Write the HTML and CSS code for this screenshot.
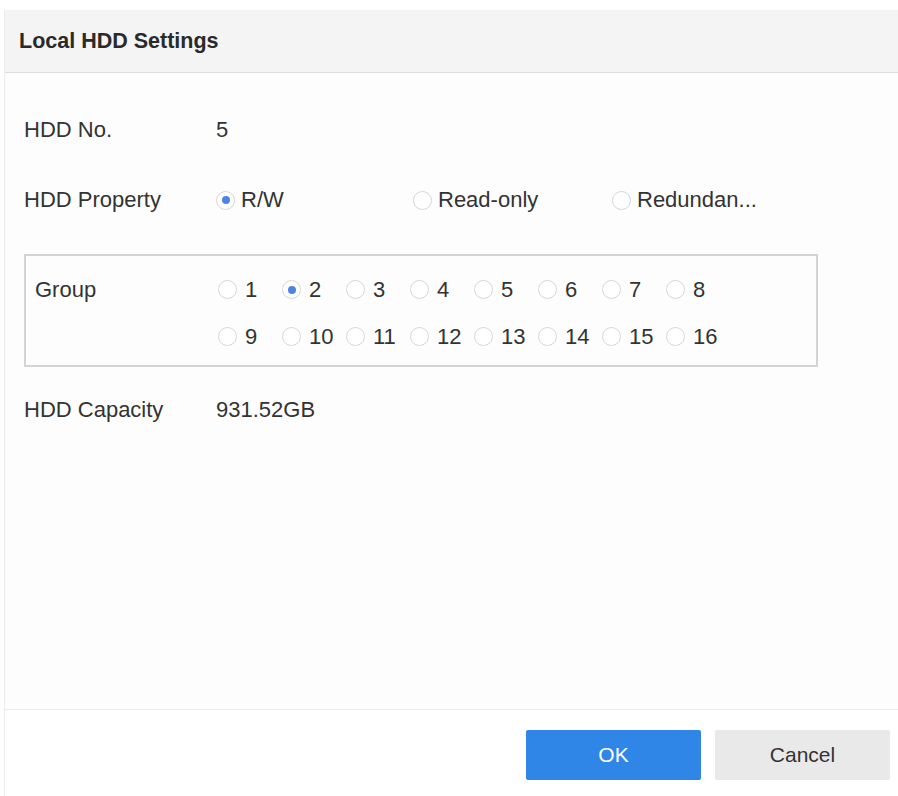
FILE: index.html
```html
<!DOCTYPE html>
<html>
<head>
<meta charset="utf-8">
<link rel="stylesheet" href="styles.css">
</head>
<body>
<div class="dialog">
  <div class="header">Local HDD Settings</div>
  <div class="content">
    <div class="row">
      <div class="label">HDD No.</div>
      <div class="value">5</div>
    </div>
    <div class="row">
      <div class="label">HDD Property</div>
      <div class="prop-options">
        <label class="radio"><span class="dot checked"></span>R/W</label>
        <label class="radio"><span class="dot"></span>Read-only</label>
        <label class="radio"><span class="dot"></span>Redundan...</label>
      </div>
    </div>
    <div class="group-box">
      <div class="group-label">Group</div>
      <div class="group-grid">
        <label class="radio g"><span class="dot"></span>1</label>
        <label class="radio g"><span class="dot checked"></span>2</label>
        <label class="radio g"><span class="dot"></span>3</label>
        <label class="radio g"><span class="dot"></span>4</label>
        <label class="radio g"><span class="dot"></span>5</label>
        <label class="radio g"><span class="dot"></span>6</label>
        <label class="radio g"><span class="dot"></span>7</label>
        <label class="radio g"><span class="dot"></span>8</label>
        <label class="radio g"><span class="dot"></span>9</label>
        <label class="radio g"><span class="dot"></span>10</label>
        <label class="radio g"><span class="dot"></span>11</label>
        <label class="radio g"><span class="dot"></span>12</label>
        <label class="radio g"><span class="dot"></span>13</label>
        <label class="radio g"><span class="dot"></span>14</label>
        <label class="radio g"><span class="dot"></span>15</label>
        <label class="radio g"><span class="dot"></span>16</label>
      </div>
    </div>
    <div class="row">
      <div class="label">HDD Capacity</div>
      <div class="value">931.52GB</div>
    </div>
  </div>
  <div class="footer">
    <button class="btn btn-ok">OK</button>
    <button class="btn btn-cancel">Cancel</button>
  </div>
</div>
</body>
</html>
```

FILE: styles.css
```css
html, body {
  margin: 0;
  padding: 0;
  background: #ffffff;
}
body {
  font-family: "Liberation Sans", Arial, sans-serif;
  color: #333333;
  font-size: 22px;
}
.dialog {
  margin: 10px 0 0 4px;
  height: 786px;
  display: flex;
  flex-direction: column;
  border-left: 1px solid #ececec;
  background: #fdfdfd;
}
.header {
  height: 62px;
  flex: none;
  background: #f4f4f4;
  border-bottom: 1px solid #dedede;
  display: flex;
  align-items: center;
  padding-left: 14px;
  font-weight: bold;
  font-size: 21.5px;
  color: #2a2a2a;
}
.content {
  flex: 1;
  padding: 22px 0 0 19px;
}
.row {
  height: 70px;
  display: flex;
  align-items: center;
}
.label {
  width: 192px;
  flex: none;
}
.prop-options {
  display: grid;
  grid-template-columns: 197px 199px 180px;
}
.radio {
  display: flex;
  align-items: center;
  gap: 6px;
  white-space: nowrap;
}
.dot {
  width: 17px;
  height: 17px;
  border: 1px solid #d6d6d6;
  border-radius: 50%;
  background: #fff;
  position: relative;
  flex: none;
}
.dot.checked::after {
  content: "";
  position: absolute;
  left: 4.5px;
  top: 4.5px;
  width: 8px;
  height: 8px;
  border-radius: 50%;
  background: #4a84e4;
}
.group-box {
  margin: 19px 0 8px 0;
  width: 790px;
  height: 109px;
  border: 2px solid #d4d4d4;
  display: flex;
  box-sizing: content-box;
}
.group-label {
  width: 183px;
  padding-left: 9px;
  padding-top: 21px;
  flex: none;
}
.group-grid {
  padding-top: 10px;
  display: grid;
  grid-template-columns: repeat(8, 64px);
  grid-auto-rows: 47px;
}
.radio.g {
  gap: 8px;
}
.footer {
  flex: none;
  height: 87px;
  border-top: 1px solid #ececec;
  background: #ffffff;
  display: flex;
  justify-content: flex-end;
  align-items: flex-start;
  gap: 14px;
  padding: 20px 8px 0 0;
  box-sizing: border-box;
}
.btn {
  width: 175px;
  height: 50px;
  border: none;
  border-radius: 2px;
  font-family: "Liberation Sans", Arial, sans-serif;
  font-size: 21px;
}
.btn-ok {
  background: #2f86e6;
  color: #ffffff;
}
.btn-cancel {
  background: #e9e9e9;
  color: #333333;
}
```
